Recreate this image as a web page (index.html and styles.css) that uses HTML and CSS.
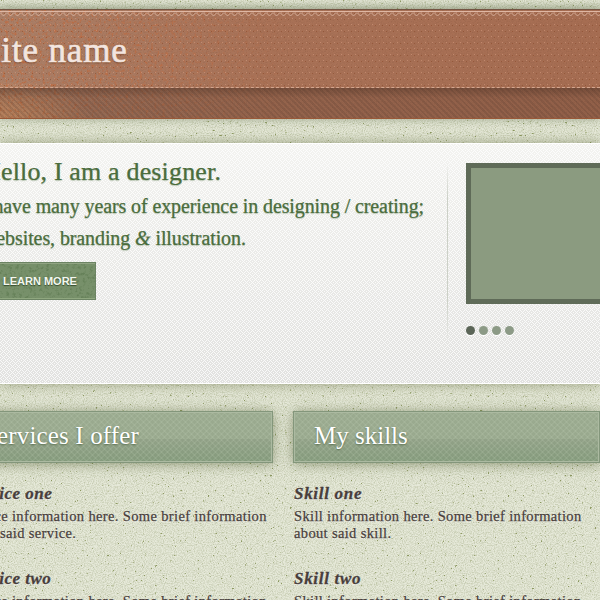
FILE: index.html
```html
<!DOCTYPE html>
<html lang="en">
<head>
<meta charset="utf-8">
<title>Site name</title>
<link rel="stylesheet" href="styles.css">
</head>
<body>
<header class="header">
  <div class="banner">
    <div class="wrap"><h1 class="logo">Site name</h1></div>
  </div>
  <div class="strip"></div>
</header>
<section class="intro">
  <div class="wrap intro-row">
    <div class="pitch">
      <h2 class="hello">Hello, I am a designer.</h2>
      <p class="lead first">I have many years of experience in designing / creating;</p>
      <p class="lead second">websites, branding <em>&amp;</em> illustration.</p>
      <a class="button">LEARN MORE</a>
    </div>
    <div class="slider">
      <div class="slide"></div>
      <div class="dots"><i class="dot active"></i><i class="dot"></i><i class="dot"></i><i class="dot"></i></div>
    </div>
  </div>
</section>
<main class="wrap columns">
  <section>
    <h2 class="title services">Services I offer</h2>
    <article class="item service"><h3>Service one</h3><p>Service information here. Some brief information<br>about said service.</p></article>
    <article class="item service"><h3>Service two</h3><p>Service information here. Some brief information<br>about said service.</p></article>
  </section>
  <section>
    <h2 class="title skills">My skills</h2>
    <article class="item"><h3>Skill one</h3><p>Skill information here. Some brief information<br>about said skill.</p></article>
    <article class="item"><h3>Skill two</h3><p>Skill information here. Some brief information<br>about said skill.</p></article>
  </section>
</main>
</body>
</html>
```
FILE: styles.css
```css
* { box-sizing: border-box; margin: 0; padding: 0; }

body {
  height: 600px;
  padding-top: 9px;
  overflow: hidden;
  font-family: "Liberation Serif", serif;
  color: #483e3b;
  background:
    linear-gradient(transparent, rgba(100,110,75,.2)) 0 0 / 100% 9px no-repeat,
    url("data:image/svg+xml,%3Csvg xmlns='http://www.w3.org/2000/svg' width='300' height='300'%3E%3Cfilter id='a' x='0' y='0' width='100%25' height='100%25' color-interpolation-filters='sRGB'%3E%3CfeTurbulence type='fractalNoise' baseFrequency='.9' numOctaves='2' stitchTiles='stitch'/%3E%3CfeColorMatrix values='0 0 0 0 .52 0 0 0 0 .56 0 0 0 0 .38 .8 0 0 0 -.3'/%3E%3C/filter%3E%3Cfilter id='b' x='0' y='0' width='100%25' height='100%25' color-interpolation-filters='sRGB'%3E%3CfeTurbulence type='fractalNoise' baseFrequency='.4' numOctaves='3' seed='8' stitchTiles='stitch'/%3E%3CfeColorMatrix values='0 0 0 0 .42 0 0 0 0 .48 0 0 0 0 .2 9 0 0 0 -6.5'/%3E%3C/filter%3E%3Crect width='300' height='300' filter='url(%23a)'/%3E%3Crect width='300' height='300' filter='url(%23b)' opacity='.7'/%3E%3C/svg%3E"),
    #e6e9d9;
}

.wrap { width: 960px; margin-left: -34px; }

.header {
  height: 110px;
  border-top: 1px solid #735443;
  box-shadow: 0 0 9px rgba(85,95,60,.45);
  background:
    url("data:image/svg+xml,%3Csvg xmlns='http://www.w3.org/2000/svg' width='300' height='110'%3E%3Cdefs%3E%3ClinearGradient id='g'%3E%3Cstop stop-color='white'/%3E%3Cstop offset='.55' stop-color='white' stop-opacity='.65'/%3E%3Cstop offset='1' stop-color='white' stop-opacity='0'/%3E%3C/linearGradient%3E%3Cmask id='m'%3E%3Crect width='300' height='110' fill='url(%23g)'/%3E%3C/mask%3E%3Cfilter id='n' x='0' y='0' width='100%25' height='100%25' color-interpolation-filters='sRGB'%3E%3CfeTurbulence type='fractalNoise' baseFrequency='.35' numOctaves='4' seed='4'/%3E%3CfeColorMatrix values='0 0 0 0 .8 0 0 0 0 .38 0 0 0 0 .17 4 0 0 0 -2.1'/%3E%3C/filter%3E%3C/defs%3E%3Cg mask='url(%23m)'%3E%3Crect width='300' height='110' filter='url(%23n)' opacity='.55'/%3E%3C/g%3E%3C/svg%3E") no-repeat,
    url("data:image/svg+xml,%3Csvg xmlns='http://www.w3.org/2000/svg' width='200' height='110'%3E%3Cfilter id='n' x='0' y='0' width='100%25' height='100%25' color-interpolation-filters='sRGB'%3E%3CfeTurbulence type='fractalNoise' baseFrequency='.8' numOctaves='2' stitchTiles='stitch'/%3E%3CfeColorMatrix values='0 0 0 0 .45 0 0 0 0 .28 0 0 0 0 .2 .5 0 0 0 -.22'/%3E%3C/filter%3E%3Crect width='200' height='110' filter='url(%23n)'/%3E%3C/svg%3E"),
    radial-gradient(ellipse 90px 40px at 0 100%, rgba(235,165,110,.8), transparent),
    linear-gradient(90deg, #ab8068, #a97257 45%, #a66d52);
}

.banner {
  height: 78px;
  padding-top: 20px;
  border-bottom: 1px dashed #d3a58e;
  background:
    url("data:image/svg+xml,%3Csvg xmlns='http://www.w3.org/2000/svg' width='7' height='6'%3E%3Cpath d='M0 1.5 3.5 5 7 1.5' fill='none' stroke='%23e2bfac' stroke-opacity='.75'/%3E%3C/svg%3E") 0 1px repeat-x,
    linear-gradient(#dfb7a3, #dfb7a3) 0 1px / 100% 1px no-repeat,
    url("data:image/svg+xml,%3Csvg xmlns='http://www.w3.org/2000/svg' width='7' height='12'%3E%3Cpath d='M1 2h1v1H1zM5 8h1v1H5z' fill='%23d69d81' fill-opacity='.55'/%3E%3Cpath d='M4 3h1v1H4zM1 9h1v1H1z' fill='%23864423' fill-opacity='.5'/%3E%3C/svg%3E");
}

.logo {
  height: 42px;
  padding-left: 15px;
  font-size: 35px;
  line-height: 41px;
  font-weight: 400;
  letter-spacing: .85px;
  color: #f3e5df;
  -webkit-text-stroke: .7px #f3e5df;
  text-shadow: 0 1px 2px rgba(80,35,15,.7);
  white-space: nowrap;
}

.strip {
  height: 31px;
  border-bottom: 1px solid #9a5938;
  background:
    linear-gradient(rgba(55,35,25,.3), transparent 10px),
    repeating-linear-gradient(45deg, rgba(75,50,40,.06) 0 2px, rgba(75,50,40,.22) 2px 4px),
    rgba(95,65,48,.22);
}

.intro {
  height: 241px;
  margin-top: 24px;
  border-top: 1px solid #fff;
  border-bottom: 1px solid #fff;
  box-shadow: 0 0 12px rgba(85,95,50,.5);
  background:
    url("data:image/svg+xml,%3Csvg xmlns='http://www.w3.org/2000/svg' width='6' height='6' shape-rendering='crispEdges'%3E%3Cpath d='M0 0h1v1H0zM1 1h1v1H1zM2 2h1v1H2zM3 3h1v1H3zM4 4h1v1H4zM5 5h1v1H5zM5 1h1v1H5zM4 2h1v1H4zM2 4h1v1H2zM1 5h1v1H1zM3 0h1v1H3zM0 3h1v1H0z' fill='%23fff' fill-opacity='.8'/%3E%3C/svg%3E"),
    linear-gradient(#f3f3f0, #e2e2e0);
}

.intro-row { display: flex; padding-top: 19px; }
.pitch {
  width: 482px;
  height: 181px;
  padding-left: 16px;
  border-right: 1px solid;
  border-image: linear-gradient(transparent, #ccd0c7 20%, #ccd0c7 75%, transparent) 1;
  color: #4b6d3d;
  white-space: nowrap;
  -webkit-text-stroke: .2px #4b6d3d;
  text-shadow: 0 1px 1px rgba(75,109,61,.35);
}
.hello { height: 27px; margin-top: -5px; font-size: 26px; line-height: 28px; font-weight: 400; letter-spacing: .16px; }
.lead { height: 32px; font-size: 20px; line-height: 32px; }
.first { margin-top: 5px; letter-spacing: -.11px; }
.second { letter-spacing: -.1px; }
.button {
  display: block;
  width: 114px;
  height: 38px;
  margin-top: 8px;
  padding-left: 20px;
  border: 1px solid #6c8463;
  box-shadow: inset 0 1px #91a483, inset 0 -1px #8fa77f;
  font: bold 11px/37px "Liberation Sans", sans-serif;
  color: #f3f7ef;
  -webkit-text-stroke: 0;
  text-shadow: 0 1px 1px #354d2c;
  background:
    url("data:image/svg+xml,%3Csvg xmlns='http://www.w3.org/2000/svg' width='120' height='38'%3E%3Cfilter id='n' x='0' y='0' width='100%25' height='100%25' color-interpolation-filters='sRGB'%3E%3CfeTurbulence type='fractalNoise' baseFrequency='.3' numOctaves='4'/%3E%3CfeColorMatrix values='0 0 0 0 .3 0 0 0 0 .42 0 0 0 0 .25 4 0 0 0 -2'/%3E%3C/filter%3E%3Crect width='120' height='38' filter='url(%23n)' opacity='.38'/%3E%3C/svg%3E"),
    #77906a;
}

.slider { width: 460px; padding-left: 18px; }
.slide { height: 141px; border: 5px solid #5f6b58; background: #8b9b80; }
.dots { display: flex; gap: 4px; margin-top: 22px; }
.dot { width: 9px; height: 9px; border-radius: 50%; background: #8c9a86; box-shadow: 0 1px #fff; }
.active { background: #5b6557; }

.columns { display: grid; grid-template-columns: 307px 307px 306px; gap: 20px; padding-top: 27px; }
.title {
  height: 52px;
  margin-bottom: 21px;
  padding-left: 20px;
  border: 1px solid #83967b;
  box-shadow: inset 0 0 0 1px #acbaa1, 0 1px 12px rgba(75,90,45,.55);
  font-size: 25px;
  line-height: 48px;
  font-weight: 400;
  color: #fff;
  text-shadow: 0 1px 2px #556b4c;
  white-space: nowrap;
  background:
    repeating-linear-gradient(45deg, rgba(205,220,195,.12) 0 1px, transparent 1px 4.24px),
    repeating-linear-gradient(-45deg, rgba(205,220,195,.12) 0 1px, transparent 1px 4.24px),
    linear-gradient(#9aaa8f, #99a98e 54%, #91a187 55%, #849a7c);
}
.services { padding-left: 16px; letter-spacing: .15px; }
.item { height: 85px; padding-left: 1px; white-space: nowrap; text-shadow: 0 1px 1px rgba(255,255,255,.7); }
.item h3 { height: 24px; font-size: 17px; line-height: 19px; font-style: italic; letter-spacing: .7px; -webkit-text-stroke: .3px #483e3b; }
.item p { font-size: 14.5px; line-height: 17px; letter-spacing: .35px; -webkit-text-stroke: .25px #483e3b; }
.service h3 { letter-spacing: .5px; }
.service { padding-left: 0; }
.service p { margin-left: -4px; letter-spacing: .36px; }
```
